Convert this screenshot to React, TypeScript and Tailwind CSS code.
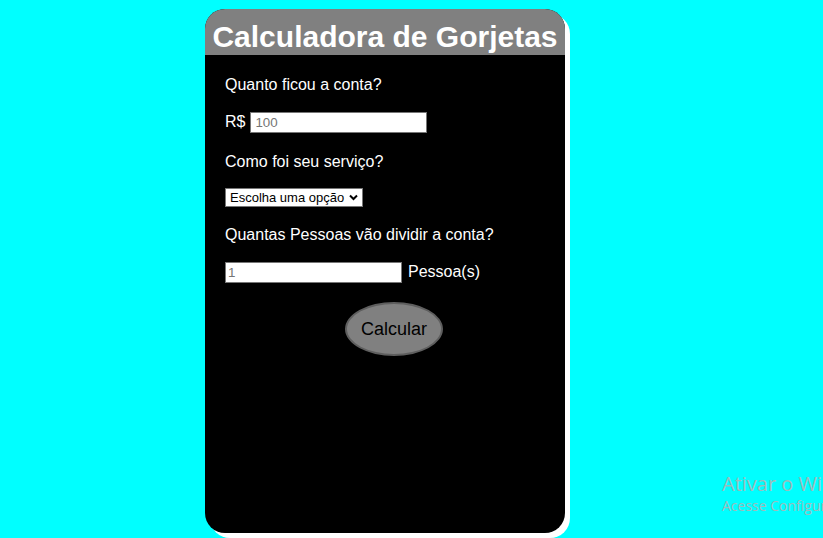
import React from "react";

export default function App() {
  return (
    <div
      className="relative w-[823px] h-[538px] overflow-hidden bg-[#00ffff] pl-[205px] pt-[9px]"
      style={{ fontFamily: '"Liberation Sans", Arial, sans-serif' }}
    >
      <div className="w-[360px] h-[524px] bg-black rounded-[20px] overflow-hidden shadow-[5px_5px_0_0_#ffffff] flex flex-col">
        <div className="h-[46px] bg-[#808080] pt-[11px] text-center">
          <h1 className="text-[30px] leading-[34px] font-bold text-white">Calculadora de Gorjetas</h1>
        </div>
        <div className="flex flex-col items-start pl-[20px] text-white text-[16px] leading-[18px]">
          <p className="mt-[21px]">Quanto ficou a conta?</p>
          <div className="mt-[18px] flex items-baseline gap-[5px]">
            <span>R$</span>
            <input
              type="text"
              placeholder="100"
              className="w-[177px] h-[21px] border border-[#767676] bg-white px-[4px] text-[13.33px] text-black placeholder:text-[#757575] outline-none"
            />
          </div>
          <p className="mt-[20px]">Como foi seu serviço?</p>
          <div className="relative mt-[17px] w-[138px] h-[19px]">
            <select className="appearance-none w-full h-full border border-[#767676] bg-white pl-[4px] pr-[16px] text-[13px] leading-[17px] text-black outline-none">
              <option>Escolha uma opção</option>
            </select>
            <svg
              className="pointer-events-none absolute right-[5px] top-[6px]"
              width="9"
              height="7"
              viewBox="0 0 9 7"
            >
              <path d="M1 1.5 L4.5 5 L8 1.5" fill="none" stroke="#000" strokeWidth="2" />
            </svg>
          </div>
          <p className="mt-[19px]">Quantas Pessoas vão dividir a conta?</p>
          <div className="mt-[18px] flex items-baseline gap-[6px]">
            <input
              type="text"
              placeholder="1"
              className="w-[177px] h-[21px] border border-[#767676] bg-white px-[2px] text-[13.33px] text-black placeholder:text-[#757575] outline-none"
            />
            <span>Pessoa(s)</span>
          </div>
          <button className="mt-[19px] ml-[120px] w-[98px] h-[54px] rounded-[50%] bg-[#808080] border-2 border-[#5e5e5e] text-black text-[18px]">
            Calcular
          </button>
        </div>
      </div>
      <div
        className="absolute left-[722px] top-[472px] whitespace-nowrap text-[#9cbcbc]"
        style={{ fontFamily: '"Open Sans", "Noto Sans", sans-serif' }}
      >
        <div className="text-[20px] leading-[24px]">Ativar o Windows</div>
        <div className="text-[14px] leading-[18px] mt-[1px]">Acesse Configurações para ativar o Windows.</div>
      </div>
    </div>
  );
}
